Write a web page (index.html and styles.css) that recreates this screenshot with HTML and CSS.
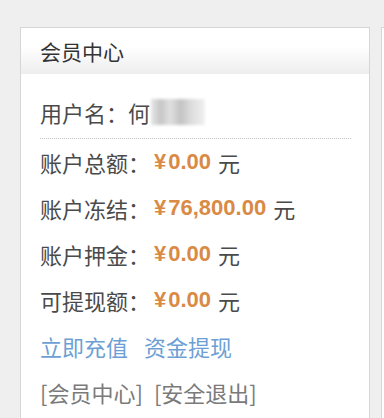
FILE: index.html
```html
<!DOCTYPE html>
<html>

<head>
    <title>会员中心</title>
    <meta name="viewport" content="width=device-width, initial-scale=1.0">
    <link rel="stylesheet" href="styles.css">
</head>

<body>
    <div class="page">
        <div class="panel">
            <div class="panel-head">会员中心</div>

            <div class="panel-body">
                <div class="user-row">
                    <span>用户名：</span><span>何</span><span class="masked"></span>
                </div>

                <div class="info-row">
                    <span class="label">账户总额：</span>
                    <span class="money"><i>¥</i>0.00</span>
                    <span class="unit">元</span>
                </div>

                <div class="info-row">
                    <span class="label">账户冻结：</span>
                    <span class="money"><i>¥</i>76,800.00</span>
                    <span class="unit">元</span>
                </div>

                <div class="info-row">
                    <span class="label">账户押金：</span>
                    <span class="money"><i>¥</i>0.00</span>
                    <span class="unit">元</span>
                </div>

                <div class="info-row">
                    <span class="label">可提现额：</span>
                    <span class="money"><i>¥</i>0.00</span>
                    <span class="unit">元</span>
                </div>

                <div class="info-row links">
                    <a href="#">立即充值</a>
                    <a href="#">资金提现</a>
                </div>

                <div class="info-row footer-links">
                    <a href="#">[会员中心]</a>
                    <a href="#">[安全退出]</a>
                </div>
            </div>
        </div>

        <!-- next panel, cut off by the screen edge -->
        <div class="panel side"></div>
    </div>
</body>
</html>
```

FILE: styles.css
```css
* {
    box-sizing: border-box;
}

body {
    margin: 0;
    height: 100vh;
    background-color: #efefef;
    font-family: "Noto Sans CJK SC", "Noto Sans", sans-serif;
    color: #4a4a4a;
    overflow: hidden;
}

.page {
    display: flex;
    gap: 11px;
    height: 100%;
    padding: 27px 0 0 20px;
}

.panel {
    flex: none;
    width: 350px;
    height: 100%;
    background-color: #ffffff;
    border: 1px solid #d6d6d6;
    border-bottom: none;
}

.panel.side {
    width: 3px;
    border-right: none;
}

.panel-head {
    height: 46px;
    line-height: 46px;
    padding-left: 19px;
    font-size: 21px;
    color: #333333;
    background: linear-gradient(#ffffff 40%, #ededed);
}

.panel-body {
    padding: 0 18px 0 19px;
}

.user-row {
    display: flex;
    align-items: center;
    height: 65px;
    padding-top: 11px;
    font-size: 22px;
    border-bottom: 1px dotted #c4c4c4;
}

.masked {
    display: inline-block;
    width: 54px;
    height: 26px;
    margin-left: 1px;
    background: linear-gradient(90deg, #e6e6e6 0%, #c6c6c6 18%, #e0e0e0 35%, #c3c3c3 55%, #dadada 72%, #f1f1f1 100%);
    filter: blur(1.5px);
}

.info-row {
    display: flex;
    align-items: center;
    height: 46px;
    font-size: 22px;
}

.money {
    margin-left: 4px;
    font-family: "Liberation Sans", Arial, sans-serif;
    font-weight: bold;
    font-size: 22px;
    color: #d98a45;
}

.money i {
    font-style: normal;
    margin-right: 2px;
}

.unit {
    margin-left: 7px;
}

a {
    text-decoration: none;
}

.links a {
    color: #6d9fd4;
    margin-right: 16px;
}

.footer-links a {
    color: #7a7a7a;
    margin-right: 11px;
}
```
